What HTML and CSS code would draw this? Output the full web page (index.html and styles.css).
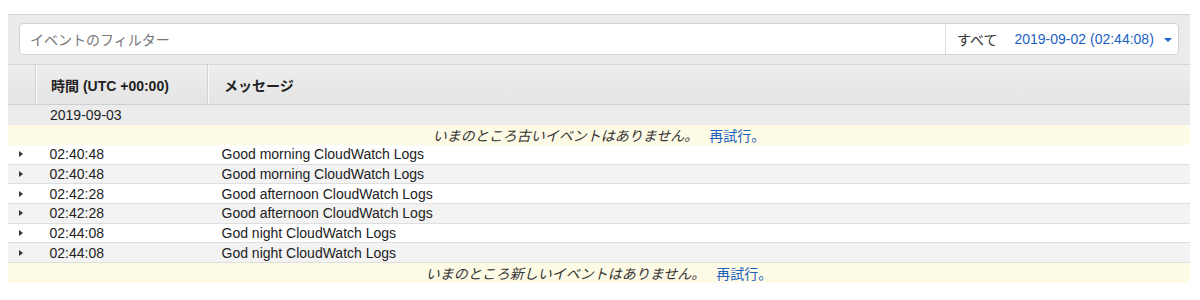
FILE: index.html
```html
<!DOCTYPE html>
<html lang="ja">
<head>
<meta charset="utf-8">
<link rel="stylesheet" href="styles.css">
</head>
<body>
<div class="panel">
  <div class="toolbar">
    <div class="filter-group">
      <div class="filter-input">イベントのフィルター</div>
      <div class="range">
        <span class="range-label">すべて</span>
        <span class="range-value">2019-09-02 (02:44:08)</span>
        <span class="caret"></span>
      </div>
    </div>
  </div>
  <div class="header">
    <div class="hcell hc-toggle"></div>
    <div class="hcell hc-time">時間 (UTC +00:00)</div>
    <div class="hcell hc-msg">メッセージ</div>
  </div>
  <div class="date-row">2019-09-03</div>
  <div class="notice">いまのところ古いイベントはありません。 <a class="retry">再試行。</a></div>
  <div class="row"><span class="tri"></span><span class="time">02:40:48</span><span class="msg">Good morning CloudWatch Logs</span></div>
  <div class="row alt"><span class="tri"></span><span class="time">02:40:48</span><span class="msg">Good morning CloudWatch Logs</span></div>
  <div class="row"><span class="tri"></span><span class="time">02:42:28</span><span class="msg">Good afternoon CloudWatch Logs</span></div>
  <div class="row alt"><span class="tri"></span><span class="time">02:42:28</span><span class="msg">Good afternoon CloudWatch Logs</span></div>
  <div class="row"><span class="tri"></span><span class="time">02:44:08</span><span class="msg">God night CloudWatch Logs</span></div>
  <div class="row alt"><span class="tri"></span><span class="time">02:44:08</span><span class="msg">God night CloudWatch Logs</span></div>
  <div class="notice">いまのところ新しいイベントはありません。 <a class="retry">再試行。</a></div>
</div>
</body>
</html>
```
FILE: styles.css
```css
html, body {
  margin: 0;
  padding: 0;
  background: #ffffff;
}
body {
  font-family: "Liberation Sans", "Noto Sans CJK JP", sans-serif;
  font-size: 14px;
  color: #222;
}
.panel {
  margin: 14px 10px 0 8px;
  border-top: 1px solid #cfcfcf;
}
.toolbar {
  background: #ebebeb;
  padding: 8px 11px 9px 11px;
  border-bottom: 1px solid #d6d6d6;
}
.filter-group {
  display: flex;
  height: 30px;
  background: #fff;
  border: 1px solid #d2d2d2;
  border-radius: 4px;
}
.filter-input {
  flex: 1;
  display: flex;
  align-items: center;
  padding-left: 10px;
  color: #777;
  font-family: "Noto Sans CJK JP", sans-serif;
  font-size: 14px;
  border-right: 1px solid #dcdcdc;
}
.range {
  width: 232px;
  display: flex;
  align-items: center;
  padding-left: 11px;
  box-sizing: border-box;
}
.range-label {
  font-family: "Noto Sans CJK JP", sans-serif;
  color: #333;
  margin-right: 17px;
}
.range-value {
  color: #1a5fc2;
}
.caret {
  margin-left: 10px;
  width: 0;
  height: 0;
  border-left: 4px solid transparent;
  border-right: 4px solid transparent;
  border-top: 4px solid #1a5fc2;
  margin-top: 2px;
}
.header {
  display: flex;
  height: 39px;
  background: linear-gradient(#eeeeee, #e4e4e4);
  border-bottom: 1px solid #d0d0d0;
}
.hcell {
  display: flex;
  align-items: center;
  font-weight: bold;
  color: #222;
  border-right: 1px solid #d2d2d2;
  box-shadow: inset 1px 0 0 #fafafa;
}
.hc-toggle {
  width: 27px;
  box-shadow: none;
}
.hc-time {
  width: 156px;
  padding-left: 15px;
}
.hc-msg {
  flex: 1;
  padding-left: 16px;
  border-right: none;
  font-family: "Noto Sans CJK JP", sans-serif;
}
.date-row {
  height: 20px;
  line-height: 20px;
  background: #ececec;
  padding-left: 42px;
  color: #222;
}
.notice {
  height: 20px;
  line-height: 20px;
  background: #fdfae6;
  text-align: center;
  font-style: italic;
  font-family: "Noto Sans CJK JP", sans-serif;
  color: #333;
}
.retry {
  font-style: normal;
  color: #1a5fc2;
  margin-left: 8px;
}
.row {
  display: flex;
  align-items: center;
  height: 18.67px;
  border-bottom: 1px solid #dedede;
  background: #fff;
}
.row.alt {
  background: #f3f3f3;
}
.tri {
  width: 0;
  height: 0;
  border-top: 3.5px solid transparent;
  border-bottom: 3.5px solid transparent;
  border-left: 4.5px solid #333;
  margin-left: 11px;
  margin-right: 26.5px;
}
.time {
  width: 172px;
}
.msg {
  flex: 1;
}
```
